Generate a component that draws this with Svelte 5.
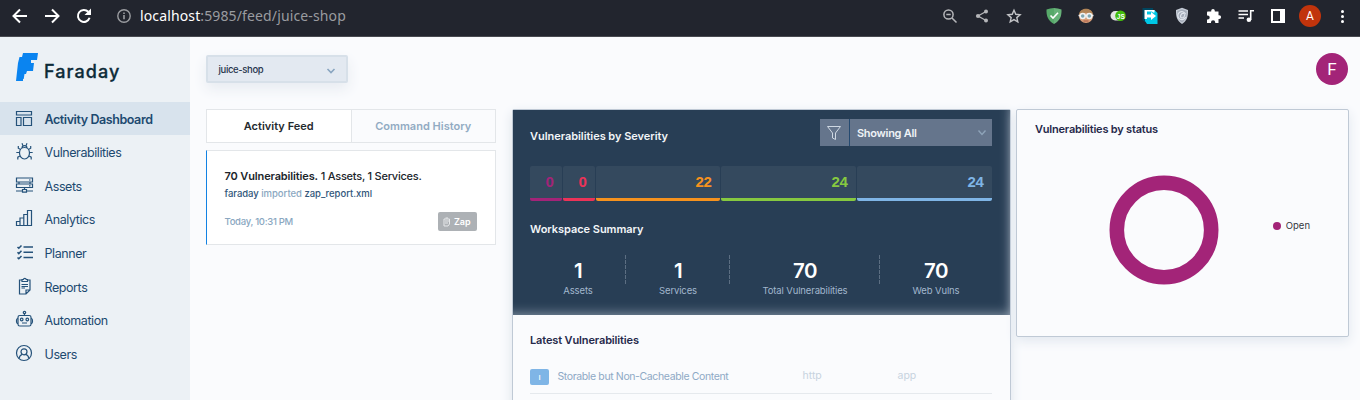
<script lang="ts">
  const nav = [
    { icon: 'dashboard', label: 'Activity Dashboard', active: true },
    { icon: 'bug', label: 'Vulnerabilities' },
    { icon: 'assets', label: 'Assets' },
    { icon: 'analytics', label: 'Analytics' },
    { icon: 'planner', label: 'Planner' },
    { icon: 'reports', label: 'Reports' },
    { icon: 'robot', label: 'Automation' },
    { icon: 'users', label: 'Users' }
  ];
  const severities = [
    { count: 0, color: '#a32478', width: 32 },
    { count: 0, color: '#ec3358', width: 32 },
    { count: 22, color: '#f6921e', width: 124 },
    { count: 24, color: '#86c940', width: 135 },
    { count: 24, color: '#7fb5e6', width: 135 }
  ];
  const summary = [
    { value: 1, label: 'Assets', width: 96 },
    { value: 1, label: 'Services', width: 104 },
    { value: 70, label: 'Total Vulnerabilities', width: 150 },
    { value: 70, label: 'Web Vulns', width: 112 }
  ];
</script>

{#snippet navIcon(name: string)}
  <svg class="nav-icon" width="20" height="20" viewBox="0 0 20 20">
    {#if name === 'dashboard'}
      <path d="M1.500 2.500h15v3.500h-15zM1.500 8.500h4.500v8H1.500zM8.500 8.500h8v8h-8z" />
    {:else if name === 'bug'}
      <path d="M9.500 5.500c3 0 5 2.500 5 5.500s-2 6-5 6-5-3-5-6 2-5.500 5-5.500zM7 6c0-3.300 5-3.300 5 0M7.800 3.400 7 1.300M11.200 3.400l.8-2.100M5.500 7.500 3.300 6.200V4M4.500 10.500H1.300M5 14l-2.200 1.200v2.300M13.500 7.500l2.200-1.300V4M14.500 10.500h3.200M14 14l2.200 1.200v2.300" />
    {:else if name === 'assets'}
      <path d="M1.500 2h16v4h-16zM1.500 8h16v3.500h-16zM4 6v2M15 6v2M9.500 11.500v2M1 15h6M12 15h6M7.500 13.500h4v2.700h-4zM14 4h1.500M14 9.800h1.500" />
    {:else if name === 'analytics'}
      <path d="M1.500 12.500h3.500v4H1.500zM5 9h3.800v7.500H5zM8.800 5.500h3.700v11H8.800zM12.500 1.500h4v15h-4z" />
    {:else if name === 'planner'}
      <path stroke-width="1.500" d="m2.500 4 1.300 1.300L6.500 2.500M2.500 9.300l1.300 1.300 2.700-2.800M2.500 14.500l1.300 1.300L6.500 13M8.500 4H18M8.500 9.300H18M8.500 14.500H18" />
    {:else if name === 'reports'}
      <path d="M7 3H4.500v14h6.500l4-4V3h-2.500M11 17v-4h4M7 2.500h1.300c.4-1.600 2.600-1.600 3 0h1.200v2H7zM6.500 7.500h6.500M6.500 9.500h6.500M6.500 11h3.500" />
    {:else if name === 'robot'}
      <rect x="3" y="5.500" width="13" height="10.500" rx="1.800" /><circle cx="9.500" cy="2.500" r="1.200" /><circle cx="6.700" cy="9.500" r="1.300" /><circle cx="12.300" cy="9.500" r="1.300" />
      <path d="M9.500 3.700v1.800M3 8.500c-2 0-2 5 0 5M16 8.500c2 0 2 5 0 5M7 13h5" />
    {:else}
      <circle cx="9" cy="9" r="7.500" /><circle cx="9" cy="7.800" r="3" /><path d="M4.200 14.500c.2-2.500 1.300-3.700 3-4.200M13.800 14.500c-.2-2.500-1.300-3.700-3-4.200" />
    {/if}
  </svg>
{/snippet}

<div class="screen">
  <header class="browser">
    <span class="cell"><svg width="20" height="20" viewBox="0 0 20 20"><path class="thick" d="M17 10H4M10 3.500 3.500 10l6.500 6.500" /></svg></span>
    <span class="cell"><svg width="20" height="20" viewBox="0 0 20 20"><path class="thick" d="M3 10h13M10 3.500l6.500 6.500-6.500 6.500" /></svg></span>
    <span class="cell"><svg width="20" height="20" viewBox="0 0 20 20"><path class="thick" d="M15.600 11.800a6 6 0 1 1-1.300-6" /><path fill="#fff" d="M17 2.500V9h-6.500z" /></svg></span>
    <span class="cell info"><svg width="16" height="16" viewBox="0 0 16 16"><circle cx="8" cy="8" r="6.200" fill="none" stroke="#9b9da1" stroke-width="1.400" /><path stroke="#9b9da1" stroke-width="1.600" d="M8 7v4.300M8 4.400V6" /></svg></span>
    <span class="url"><b>localhost</b>:5985/feed/juice-shop</span>
    <div class="actions">
      <span class="cell"><svg width="20" height="20" viewBox="0 0 20 20"><g fill="none" stroke="#b5b6b9" stroke-width="1.500"><circle cx="8.500" cy="8.500" r="4.600" /><path d="m12 12 4.500 4.500M6.300 8.500h4.400" /></g></svg></span>
      <span class="cell"><svg width="20" height="20" viewBox="0 0 20 20"><path fill="none" stroke="#b5b6b9" stroke-width="1.300" d="M14 5.500 6 10l8 4.500" /><g fill="#b5b6b9"><circle cx="14" cy="5.500" r="2" /><circle cx="6" cy="10" r="2.100" /><circle cx="14" cy="14.500" r="2" /></g></svg></span>
      <span class="cell"><svg width="20" height="20" viewBox="0 0 20 20"><path fill="none" stroke="#c3c4c7" stroke-width="1.400" d="m10 4.200 1.800 4.100 4.300.4-3.300 2.900 1 4.300-3.800-2.300-3.800 2.300 1-4.300-3.300-2.900 4.300-.4z" /></svg></span>
      <span class="cell first-ext"><svg width="20" height="20" viewBox="0 0 20 20"><path fill="#67b279" d="M10 2q4 0 7.500 1.500c.2 7-1.500 11-7.500 14.500Z" /><path fill="#57a96a" d="M10 2q-4 0-7.500 1.500c-.2 7 1.500 11 7.500 14.500Z" /><path fill="none" stroke="#fff" stroke-width="1.600" d="m6.500 9.500 2.500 2.600 5-5.300" /></svg></span>
      <span class="cell"><svg width="20" height="20" viewBox="0 0 20 20"><circle cx="10" cy="10" r="7" fill="#d89d77" /><path fill="#b18557" d="M3 9c0-8.500 14-8.500 14 0-3-3-11-3-14 0z" /><path stroke="#eee" stroke-width="1.500" d="M2.500 9.500h15" /><circle cx="6.700" cy="10" r="2.500" fill="#7fa6b0" stroke="#f0f3f3" stroke-width="1.500" /><circle cx="13.300" cy="10" r="2.500" fill="#7fa6b0" stroke="#f0f3f3" stroke-width="1.500" /><path stroke="#a65846" d="M7.500 15h5" /></svg></span>
      <span class="cell"><svg width="20" height="20" viewBox="0 0 20 20"><rect x="2.500" y="5" width="14" height="9.500" rx="4.700" fill="#e3e3e3" /><circle cx="12.500" cy="9.700" r="5.300" fill="#43bd0d" /><text x="8.800" y="12.500" class="js">JS</text></svg></span>
      <span class="cell"><svg width="20" height="20" viewBox="0 0 20 20"><path fill="#00465f" d="M2.500 2H13v14H5l-2.500-2z" /><path fill="#00c8e5" d="M5 4h9.500L17.500 7v11H7l-2-3z" /><path fill="#fff" d="M4.500 4h10v2.500h-1.500L12 5.500H7V13H4.500zM7 8.500h4V6l5 4-5 4v-2.500H7z" /></svg></span>
      <span class="cell"><svg width="20" height="20" viewBox="0 0 20 20"><path fill="#c5cbd5" d="M10 1.800 16 4c.2 7-1.200 11-6 14-4.800-3-6.200-7-6-14z" /><path fill="#a4acb9" d="M10 3.200 14.800 5c.1 5-1 9-4.800 11.500C6.200 14 5.100 10 5.200 5z" /><path fill="none" stroke="#e0e5ed" stroke-width="1.200" d="M13.500 8a4 4 0 1 0 .1 3M12 7.500c-3-1-5 4-2 4.500 2 0 3-3 3-5" /></svg></span>
      <span class="cell"><svg width="20" height="20" viewBox="0 0 20 20"><path fill="#fff" d="M3.500 5.500h3.700V4.800a1.800 1.800 0 0 1 3.600 0v.7h3.700v3.700h.7a1.900 1.900 0 0 1 0 3.800h-.7v4h-3.300v-.7a2.100 2.100 0 0 0-4.200 0v.7H3v-3.500h.7a2 2 0 0 0 0-4H3V7q0-1.500.5-1.500z" /></svg></span>
      <span class="cell"><svg width="20" height="20" viewBox="0 0 20 20"><path stroke="#fff" stroke-width="1.600" fill="none" d="M2.500 5h9.500M2.500 8.500h9.500M2.500 12h5.500M14.700 14V4.700H18" /><circle cx="12.900" cy="13.700" r="2.300" fill="#fff" /></svg></span>
      <span class="cell"><svg width="20" height="20" viewBox="0 0 20 20"><path fill="#fff" fill-rule="evenodd" d="M3 3h14v14H3zm2 2v10h7V5z" /></svg></span>
      <span class="cell"><span class="profile">A</span></span>
      <span class="cell"><svg width="20" height="20" viewBox="0 0 20 20"><g fill="#fff"><circle cx="10.500" cy="5.500" r="1.500" /><circle cx="10.500" cy="10.500" r="1.500" /><circle cx="10.500" cy="15.500" r="1.500" /></g></svg></span>
    </div>
  </header>

  <div class="body">
    <aside>
      <div class="logo">
        <svg width="22" height="29" viewBox="0 0 22 29"><path fill="#0a84f0" d="M7 0h15l-1 7h-6v3h3l-1 8h-6l-1 3H8.500l-.8 5H7v2H0l1-9 1-9 1.500-6H6z" /></svg>
        <span class="wordmark">Faraday</span>
      </div>
      <nav>
        {#each nav as item}
          <div class="nav-row" class:active={item.active}>
            {@render navIcon(item.icon)}
            <span>{item.label}</span>
          </div>
        {/each}
      </nav>
    </aside>

    <main>
      <div class="topbar">
        <div class="workspace">
          <span>juice-shop</span>
          <svg width="10" height="8" viewBox="0 0 10 8"><path fill="none" stroke="#89a5c0" stroke-width="1.600" d="m1.500 2 3.500 3.500L8.500 2" /></svg>
        </div>
        <span class="avatar">F</span>
      </div>

      <div class="columns">
        <section class="feed">
          <div class="tabs">
            <span class="tab on">Activity Feed</span>
            <span class="tab off">Command History</span>
          </div>
          <article>
            <p class="headline"><b>70 Vulnerabilities.</b> 1 Assets, 1 Services.</p>
            <p class="detail">faraday <i>imported</i> zap_report.xml</p>
            <div class="foot">
              <span class="time">Today, 10:31 PM</span>
              <span class="tag">
                <svg width="8" height="10" viewBox="0 0 8 10"><path fill="none" stroke="#e6e8ea" d="M1 2h5.500v5L5 9H1zM2.500 1h2.500M2 4h4M2 6h3" /></svg>
                Zap
              </span>
            </div>
          </article>
        </section>

        <section class="center">
          <div class="dark">
            <div class="dark-head">
              <h2 class="sev-title">Vulnerabilities by Severity</h2>
              <div class="filter">
                <span class="funnel"><svg width="16" height="16" viewBox="0 0 16 16"><path fill="none" stroke="#cfd8e2" d="M1.500 1.500h13L9.500 8v6.500l-3-1.500V8z" /></svg></span>
                <span class="showing"><span>Showing All</span><svg width="10" height="8" viewBox="0 0 10 8"><path fill="none" stroke="#8ea3b9" stroke-width="1.400" d="m1.500 1.500 3.500 4 3.500-4" /></svg></span>
              </div>
            </div>
            <div class="bars">
              {#each severities as s}
                <div class="bar" style="width: {s.width}px; color: {s.color}">{s.count}</div>
              {/each}
            </div>
            <h2 class="sum-title">Workspace Summary</h2>
            <div class="summary">
              {#each summary as s}
                <div class="stat" style="width: {s.width}px">
                  <strong>{s.value}</strong><span>{s.label}</span>
                </div>
              {/each}
            </div>
          </div>
          <div class="latest">
            <h2>Latest Vulnerabilities</h2>
            <div class="vuln">
              <span class="badge">I</span>
              <span class="vname">Storable but Non-Cacheable Content</span>
              <span class="svc">http</span>
              <span class="target">app</span>
            </div>
          </div>
        </section>

        <section class="status">
          <h2>Vulnerabilities by status</h2>
          <div class="chart">
            <svg width="110" height="110" viewBox="0 0 110 110"><circle cx="55" cy="55" r="47.200" fill="none" stroke="#a32478" stroke-width="14.600" /></svg>
            <span class="legend"><span class="dot"></span><span>Open</span></span>
          </div>
        </section>
      </div>
    </main>
  </div>
</div>

<style>
  :global(body) { margin: 0; overflow: hidden; }
  .screen { width: 1360px; height: 400px; overflow: hidden; font-family: Inter, "Liberation Sans", sans-serif; background: #fafbfd; display: flex; flex-direction: column; }
  .screen * { box-sizing: border-box; }
  h2, p { margin: 0; }
  svg { display: block; flex: none; }
  .browser { height: 37px; flex: none; background: #22252e; border-bottom: 1px solid #484a50; display: flex; align-items: center; padding: 0 2px 5px 4px; }
  .cell { width: 32px; display: flex; justify-content: center; align-items: center; flex: none; }
  .thick { fill: none; stroke: #fff; stroke-width: 2; }
  .info { margin-left: 8px; }
  .url { font: 14px/20px "Noto Sans", sans-serif; color: #9a9ca0; white-space: nowrap; letter-spacing: .13px; }
  .url b { font-weight: 400; color: #fff; }
  .actions { margin-left: auto; display: flex; align-items: center; }
  .first-ext { margin-left: 8px; }
  .js { font: 700 6.500px "Liberation Sans", sans-serif; fill: #fff; }
  .profile { width: 22px; height: 22px; border-radius: 50%; background: #c1340c; color: #fff; font: 12px/23px Roboto, sans-serif; text-align: center; }

  .body { flex: 1; display: flex; min-height: 0; }
  aside { width: 190px; background: #ecf1f5; flex: none; }
  .logo { height: 65px; padding: 16px 0 0 16px; display: flex; gap: 6px; }
  .wordmark { font: 500 18px/38px Inter, sans-serif; color: #0d2b38; letter-spacing: 1.050px; -webkit-text-stroke: .3px #0d2b38; }
  .nav-row { height: 33.570px; display: flex; align-items: center; gap: 9.500px; padding-left: 15px; font-size: 12.500px; color: #1d4a70; letter-spacing: -.42px; white-space: nowrap; }
  .nav-row span { padding-top: 1px; }
  .nav-row.active { background: linear-gradient(#d8e3ed, #d8e3ed) top / 100% 33px no-repeat; font-weight: 600; }
  .nav-icon { fill: none; stroke: #25527a; stroke-width: 1.200; }

  main { flex: 1; padding: 16px 11px 0 16px; min-width: 0; }
  .topbar { height: 56px; display: flex; justify-content: space-between; align-items: flex-start; padding-right: 1px; }
  .workspace { margin-top: 2px; width: 142px; height: 28px; background: #e3e9f1; border: 2px solid #d7e0e9; border-radius: 2px; display: flex; align-items: center; justify-content: space-between; padding: 0 10px 0 10.500px; font-size: 9.500px; font-weight: 500; color: #28364d; box-shadow: 0 6px 14px #e7ebf1; letter-spacing: -.36px; }
  .workspace svg { margin-top: 3px; }
  .avatar { width: 32px; height: 32px; border-radius: 50%; background: #a32478; color: #fff; font: 17px/32px Roboto, sans-serif; text-align: center; }
  .columns { display: flex; align-items: flex-start; }
  .feed { width: 290px; margin-right: 16px; }
  .tabs { height: 34px; display: flex; border: 1px solid #e3e6e9; }
  .tab { flex: 1; text-align: center; font: 600 11px/33px Inter, sans-serif; letter-spacing: .02px; }
  .on { background: #fff; color: #252a2e; border-right: 1px solid #e3e6e9; }
  .off { color: #92abc3; }
  article { margin-top: 7px; height: 95px; background: #fff; border: 1px solid #e3e6e9; border-left-color: #1282e3; padding: 18px 18px 0 17.500px; }
  .headline { font-size: 11px; line-height: 15px; color: #20252b; letter-spacing: -.24px; white-space: nowrap; font-weight: 500; }
  .headline b { font-weight: 600; letter-spacing: -.13px; }
  .detail { margin-top: 3px; font-size: 9.500px; line-height: 14px; color: #31567a; font-weight: 500; letter-spacing: -.03px; }
  .detail i { font-style: normal; color: #8aa7c1; }
  .foot { margin-top: 11px; display: flex; justify-content: space-between; align-items: center; }
  .time { font-size: 9.500px; font-weight: 500; color: #8aa7c1; letter-spacing: -.29px; }
  .tag { width: 39px; height: 19px; background: #adb1b5; border-radius: 2px; color: #fff; font: 600 9px/19px Inter, sans-serif; display: flex; align-items: center; gap: 3px; padding-left: 5px; }

  .center { width: 499px; height: 310px; border: 1px solid #bfc9d5; box-shadow: 0 4px 12px #dce3eb; background: #fafbfd; border-radius: 2px; margin-right: 5px; }
  .dark { height: 205px; background: #283e55; padding: 9px 18px 0 17px; box-shadow: inset -8px -10px 12px -9px #8998a9; }
  .dark-head { display: flex; justify-content: space-between; }
  h2 { font-size: 11px; line-height: 16px; font-weight: 600; letter-spacing: -.13px; white-space: nowrap; }
  .dark h2 { color: #f2f5f8; letter-spacing: -.04px; }
  .sev-title { padding-top: 9px; }
  .filter { width: 172px; height: 27px; display: flex; gap: 1px; background: #254a70; }
  .funnel { width: 29px; background: #65758c; display: flex; align-items: center; justify-content: center; padding-right: 2px; }
  .showing { flex: 1; background: #65758c; display: flex; align-items: center; justify-content: space-between; padding: 0 5px 0 7px; color: #eef2f6; font-size: 11px; font-weight: 600; letter-spacing: -.28px; }
  .bars { margin-top: 20px; height: 35px; display: flex; gap: 1px; }
  .bar { flex: none; background: #34495e; border-bottom: 3px solid currentColor; border-radius: 2px; text-align: right; padding-right: 8.500px; font: 700 15px/31px "Liberation Sans", sans-serif; letter-spacing: -.3px; }
  .sum-title { margin-top: 20px; }
  .summary { margin-top: 18px; display: flex; }
  .stat { text-align: center; height: 46px; display: flex; flex-direction: column; white-space: nowrap; }
  .stat:not(:last-child) { background: repeating-linear-gradient(#5c6e82 0 4px, transparent 4px 5px) right top / 1px 29px no-repeat; }
  .stat strong { font: 600 20.500px/31px Inter, sans-serif; color: #fff; letter-spacing: -.5px; }
  .stat span { font-size: 9.500px; line-height: 9px; color: #a2b7cd; letter-spacing: -.13px; }
  .latest { padding: 17px 18px 0 17px; }
  .latest h2, .status h2 { color: #25284a; }
  .status h2 { letter-spacing: -.2px; }
  .vuln { height: 46px; border-bottom: 1px solid #e5e9ed; display: flex; align-items: flex-end; padding-bottom: 8px; line-height: 16px; font-size: 10.500px; color: #8ea9c5; white-space: nowrap; }
  .badge { width: 19px; height: 16px; border-radius: 2px; background: #7fb5e6; color: #fff; font: 700 6px/17px Inter, sans-serif; text-align: center; margin-right: 8.500px; }
  .vname { width: 245px; letter-spacing: -.38px; }
  .svc { width: 95px; }
  .svc, .target { color: #c7d3df; padding-bottom: 1px; }

  .status { width: 333px; height: 228px; border: 1px solid #bfc9d5; border-radius: 2px; box-shadow: 0 4px 12px #e1e7ef; background: #fafbfd; padding: 11px 38px 0 18px; }
  .chart { margin-top: 37.500px; padding-left: 73.500px; display: flex; justify-content: space-between; }
  .legend { margin-top: 44px; height: 14px; display: flex; align-items: center; gap: 5px; font-size: 9.500px; color: #34373d; }
  .dot { width: 8px; height: 8px; border-radius: 50%; background: #a32478; }
</style>
